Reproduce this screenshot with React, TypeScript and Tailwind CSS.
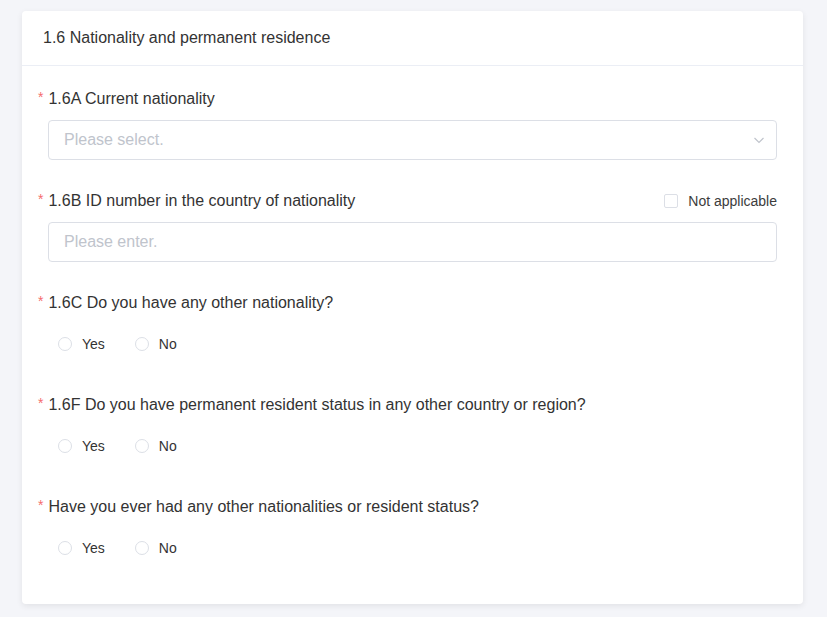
const Label = ({ text, right }: { text: string; right?: React.ReactNode }) => (
  <div className="flex h-[22px] items-center justify-between">
    <div className="flex items-center text-[16px] text-[#333]">
      <span className="mb-[4px] mr-[5px] text-[14px] text-[#f56c6c]">*</span>
      {text}
    </div>
    {right}
  </div>
);

const RadioGroup = () => (
  <div className="ml-[10px] mt-[10px] flex h-[40px] items-center pl-[10px] text-[14px] text-[#333]">
    <label className="mr-[30px] flex items-center">
      <span className="mr-[10px] h-[14px] w-[14px] rounded-full border border-[#dcdfe6] bg-white" />
      Yes
    </label>
    <label className="flex items-center">
      <span className="mr-[10px] h-[14px] w-[14px] rounded-full border border-[#dcdfe6] bg-white" />
      No
    </label>
  </div>
);

const App = () => {
  return (
    <div className="min-h-[617px] bg-[#f4f5f9] pl-[22px] pr-[24px] pt-[11px] pb-[13px] font-['Liberation_Sans',Arial,sans-serif]">
      <div className="rounded-[4px] bg-white shadow-[0_2px_6px_rgba(0,0,0,0.08)]">
        <div className="flex h-[55px] items-center border-b border-[#ebeef5] pl-[21px] text-[16px] text-[#333]">
          1.6 Nationality and permanent residence
        </div>
        <div className="pb-[36px] pl-[16px] pr-[26px] pt-[22px]">
          <div className="mb-[30px]">
            <Label text="1.6A Current nationality" />
            <div className="ml-[10px] mt-[10px] flex h-[40px] items-center justify-between rounded-[4px] border border-[#dcdfe6] pl-[15px] pr-[11px] text-[16px] text-[#c0c4cc]">
              <span>Please select.</span>
              <svg width="12" height="12" viewBox="0 0 12 12" fill="none" stroke="#c0c4cc" strokeWidth="1.2">
                <path d="M1.5 4l4.5 4.5L10.5 4" />
              </svg>
            </div>
          </div>
          <div className="mb-[30px]">
            <Label
              text="1.6B ID number in the country of nationality"
              right={
                <label className="flex items-center text-[14px] text-[#3c3c3c]">
                  <span className="mr-[10px] h-[14px] w-[14px] rounded-[2px] border border-[#dcdfe6] bg-white" />
                  Not applicable
                </label>
              }
            />
            <div className="ml-[10px] mt-[10px] flex h-[40px] items-center rounded-[4px] border border-[#dcdfe6] pl-[15px] text-[16px] text-[#c0c4cc]">
              Please enter.
            </div>
          </div>
          <div className="mb-[30px]">
            <Label text="1.6C Do you have any other nationality?" />
            <RadioGroup />
          </div>
          <div className="mb-[30px]">
            <Label text="1.6F Do you have permanent resident status in any other country or region?" />
            <RadioGroup />
          </div>
          <div>
            <Label text="Have you ever had any other nationalities or resident status?" />
            <RadioGroup />
          </div>
        </div>
      </div>
    </div>
  );
};

export default App;
